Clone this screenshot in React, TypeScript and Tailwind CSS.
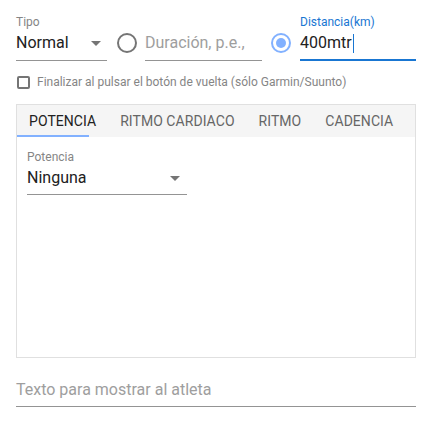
import React from "react";

const font = { fontFamily: "Roboto, 'Liberation Sans', sans-serif" };

function Arrow() {
  return (
    <svg width="10" height="5" viewBox="0 0 10 5" className="shrink-0">
      <path d="M0 0 L10 0 L5 5 Z" fill="#757575" />
    </svg>
  );
}

function Radio({ checked }: { checked?: boolean }) {
  const color = checked ? "#82b1ff" : "#757575";
  return (
    <svg width="24" height="24" viewBox="0 0 24 24" className="shrink-0 mb-[6px]">
      <circle cx="12" cy="12" r="9" fill="none" stroke={color} strokeWidth="2" />
      {checked && <circle cx="12" cy="12" r="5" fill={color} />}
    </svg>
  );
}

const tabs = ["POTENCIA", "RITMO CARDIACO", "RITMO", "CADENCIA"];

export default function App() {
  return (
    <div className="w-[430px] h-[426px] bg-white pl-4 pr-[14px] pt-[15px]" style={font}>
      {/* fila superior */}
      <div className="flex items-end">
        <div className="w-[91px] flex flex-col">
          <span className="text-[12px] leading-[14px] text-[#858585]">Tipo</span>
          <div className="flex items-center justify-between pt-[2px] pb-[5px] pr-[6px] border-b border-[#949494]">
            <span className="text-[16px] leading-[24px] text-[#212121]">Normal</span>
            <Arrow />
          </div>
        </div>
        <div className="ml-[8px]">
          <Radio />
        </div>
        <div className="ml-[6px] w-[117px] pt-[2px] pb-[5px] border-b border-[#949494] overflow-hidden">
          <span className="text-[16px] leading-[24px] text-[#9e9e9e] whitespace-nowrap">Duración, p.e.,</span>
        </div>
        <div className="ml-[7px]">
          <Radio checked />
        </div>
        <div className="ml-[7px] w-[116px] flex flex-col">
          <span className="text-[12px] leading-[14px] text-[#1976d2]">Distancia(km)</span>
          <div className="flex items-center pt-[2px] pb-[4px] border-b-2 border-[#1976d2]">
            <span className="text-[16px] leading-[24px] text-[#212121]">400mtr</span>
            <span className="w-px h-[19px] bg-[#1976d2] ml-px" />
          </div>
        </div>
      </div>

      {/* checkbox */}
      <div className="flex items-center mt-[14px] h-[14px]">
        <span className="ml-px w-[13px] h-[13px] border-2 border-[#757575] rounded-[2px]" />
        <span className="ml-[7px] text-[12px] leading-[14px] text-[#858585] whitespace-nowrap">
          Finalizar al pulsar el botón de vuelta (sólo Garmin/Suunto)
        </span>
      </div>

      {/* pestañas */}
      <div className="mt-[15px] h-[254px] border border-[#e0e0e0] flex flex-col">
        <div className="flex h-[32px] bg-[#f5f5f5]">
          {tabs.map((t, i) => (
            <div
              key={t}
              className={
                "relative px-3 py-[6px] text-[14px] leading-[20px] tracking-[0.05px] whitespace-nowrap " +
                (i === 0 ? "text-[#212121]" : "text-[#666666]")
              }
            >
              {t}
              {i === 0 && (
                <span className="absolute left-0 bottom-0 w-[72px] h-[2px] bg-[#82b1ff]" />
              )}
            </div>
          ))}
        </div>
        <div className="pl-[10px] pt-[13px]">
          <div className="w-[160px] flex flex-col">
            <span className="text-[12px] leading-[14px] text-[#858585]">Potencia</span>
            <div className="flex items-center justify-between pt-[2px] pb-[4px] pr-[7px] border-b border-[#949494]">
              <span className="text-[16px] leading-[24px] text-[#212121]">Ninguna</span>
              <Arrow />
            </div>
          </div>
        </div>
      </div>

      {/* texto atleta */}
      <div className="mt-[20px] pb-[4px] border-b border-[#949494]">
        <span className="text-[16px] leading-[24px] text-[#9e9e9e]">Texto para mostrar al atleta</span>
      </div>
    </div>
  );
}
